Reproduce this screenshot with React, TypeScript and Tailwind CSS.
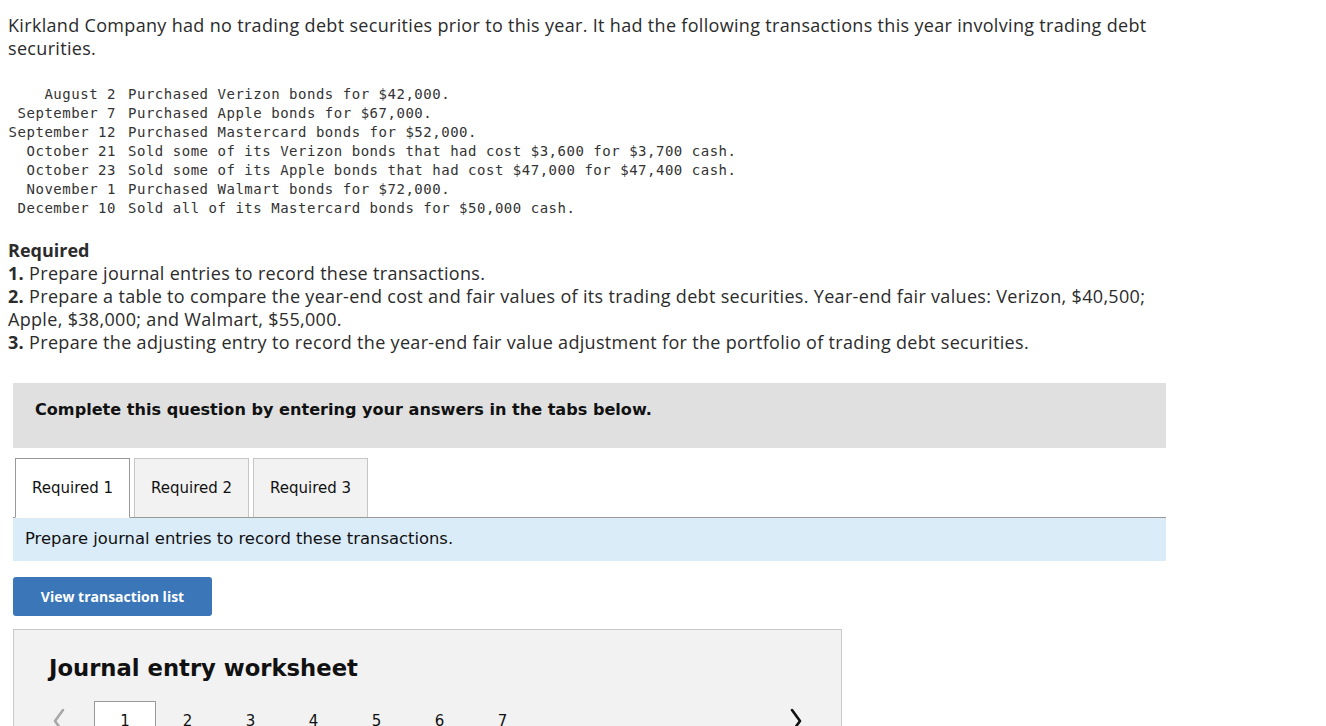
import React from "react";

const rows: [string, string][] = [
  ["August 2", "Purchased Verizon bonds for $42,000."],
  ["September 7", "Purchased Apple bonds for $67,000."],
  ["September 12", "Purchased Mastercard bonds for $52,000."],
  ["October 21", "Sold some of its Verizon bonds that had cost $3,600 for $3,700 cash."],
  ["October 23", "Sold some of its Apple bonds that had cost $47,000 for $47,400 cash."],
  ["November 1", "Purchased Walmart bonds for $72,000."],
  ["December 10", "Sold all of its Mastercard bonds for $50,000 cash."],
];

function Chevron({ dir, color }: { dir: "l" | "r"; color: string }) {
  return (
    <svg width="14" height="26" viewBox="0 0 14 26" fill="none">
      {dir === "l" ? (
        <polyline points="11,2 3,13 11,24" stroke={color} strokeWidth="2.6" strokeLinecap="round" strokeLinejoin="round" />
      ) : (
        <polyline points="3,2 11,13 3,24" stroke={color} strokeWidth="2.6" strokeLinecap="round" strokeLinejoin="round" />
      )}
    </svg>
  );
}

export default function App() {
  const sans = { fontFamily: "'Open Sans', Lato, sans-serif" };
  const tah = { fontFamily: "'DejaVu Sans', Verdana, sans-serif" };
  return (
    <div className="min-h-[726px] bg-white pl-[8px] pt-[14px] text-[#2b2b2b]">
      <p className="w-[1170px] text-[18px] leading-[23px] tracking-[0.32px]" style={sans}>
        Kirkland Company had no trading debt securities prior to this year. It had the following transactions this year involving trading debt
        <br />
        securities.
      </p>

      <div
        className="mt-[25px] grid grid-cols-[108px_auto] gap-x-[12px] text-[14px] leading-[19px] tracking-[0.52px] text-[#333]"
        style={{ fontFamily: "'DejaVu Sans Mono', 'Liberation Mono', monospace" }}
      >
        {rows.map(([d, t]) => (
          <React.Fragment key={d}>
            <div className="text-right whitespace-nowrap">{d}</div>
            <div className="whitespace-nowrap">{t}</div>
          </React.Fragment>
        ))}
      </div>

      <div className="mt-[21px] w-[1170px] text-[18px] leading-[23px] tracking-[0.32px]" style={sans}>
        <div className="font-bold tracking-normal">Required</div>
        <div>
          <span className="font-bold">1.</span> Prepare journal entries to record these transactions.
        </div>
        <div>
          <span className="font-bold">2.</span> Prepare a table to compare the year-end cost and fair values of its trading debt securities. Year-end fair values: Verizon, $40,500;
          <br />
          Apple, $38,000; and Walmart, $55,000.
        </div>
        <div>
          <span className="font-bold">3.</span> Prepare the adjusting entry to record the year-end fair value adjustment for the portfolio of trading debt securities.
        </div>
      </div>

      <div className="ml-[5px] mt-[29px] w-[1153px]">
        <div className="h-[65px] bg-[#e0e0e0] pl-[22px] pt-[17px]">
          <div className="text-[16.1px] font-bold leading-[20px] text-[#111]" style={tah}>
            Complete this question by entering your answers in the tabs below.
          </div>
        </div>

        <div className="mt-[10px] flex gap-[4px] border-b border-[#999] pl-[2px]" style={tah}>
          <div className="-mb-px flex h-[60px] w-[115px] items-center justify-center border border-b-white border-[#999] bg-white text-[15px] text-[#111]">
            Required 1
          </div>
          <div className="flex h-[59px] w-[115px] items-center justify-center border border-b-0 border-[#c6c6c6] bg-[#f2f2f2] text-[15px] text-[#111]">
            Required 2
          </div>
          <div className="flex h-[59px] w-[115px] items-center justify-center border border-b-0 border-[#c6c6c6] bg-[#f2f2f2] text-[15px] text-[#111]">
            Required 3
          </div>
        </div>

        <div className="flex h-[43px] items-center bg-[#dbecf9] pl-[12px] text-[16.4px] text-[#111]" style={tah}>
          Prepare journal entries to record these transactions.
        </div>

        <button
          className="mt-[16px] flex h-[39px] w-[199px] items-center justify-center rounded-[3px] bg-[#3a76b8] text-[14px] font-bold text-white"
          style={sans}
        >
          View transaction list
        </button>

        <div className="mt-[13px] h-[120px] w-[829px] border border-[#c8c8c8] bg-[#f2f2f2]">
          <div className="pl-[35px] pt-[24px] text-[22.7px] font-bold leading-[28px] text-[#111]" style={tah}>
            Journal entry worksheet
          </div>
          <div className="mt-[19px] flex items-start" style={tah}>
            <div className="w-[80px] pl-[38px] pt-[7px]">
              <Chevron dir="l" color="#a8a8a8" />
            </div>
            <div className="flex h-[40px] w-[62px] items-center justify-center border border-[#999] bg-white text-[15px] text-[#111]">
              1
            </div>
            {["2", "3", "4", "5", "6", "7"].map((n) => (
              <div key={n} className="flex h-[40px] w-[63px] items-center justify-center text-[15px] text-[#111]">
                {n}
              </div>
            ))}
            <div className="ml-auto pr-[38px] pt-[7px]">
              <Chevron dir="r" color="#111" />
            </div>
          </div>
        </div>
      </div>
    </div>
  );
}
